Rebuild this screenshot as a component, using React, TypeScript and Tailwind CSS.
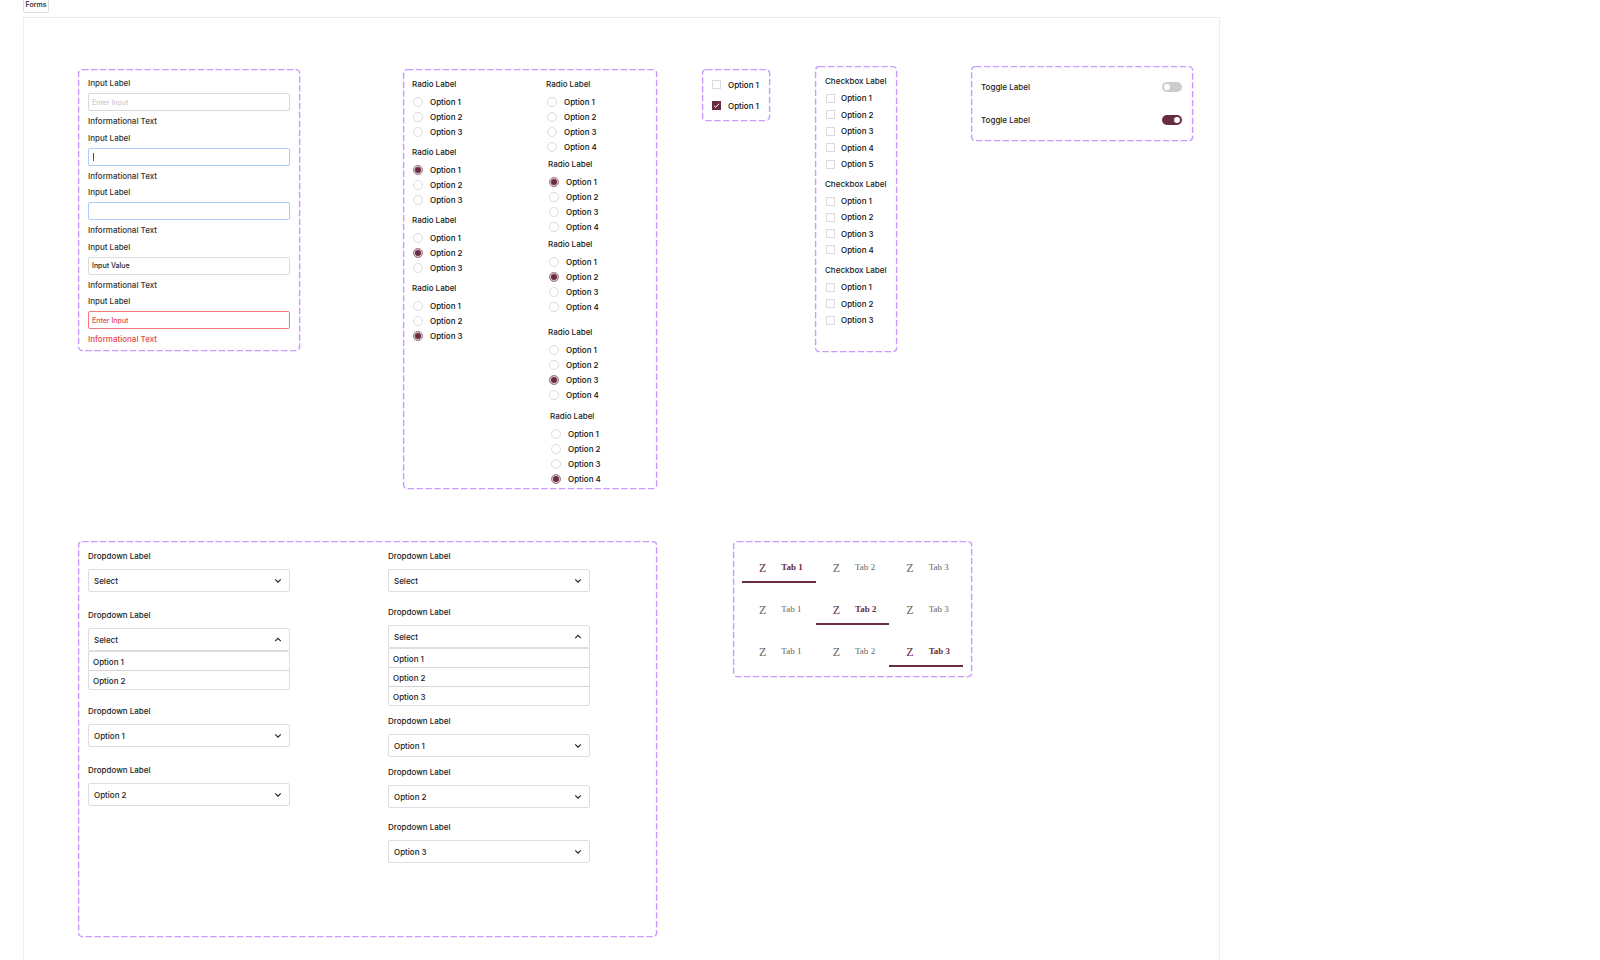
import { useId, useState, type ReactNode } from "react";

function Frame({ className, children }: { className: string; children: ReactNode }) {
  return (
    <section className={`relative shrink-0 ${className}`}>
      <svg className="pointer-events-none absolute inset-0 h-full w-full overflow-visible" aria-hidden="true">
        <rect
          x="0.6"
          y="0.6"
          rx="3.5"
          className="h-[calc(100%-1px)] w-[calc(100%-1px)]"
          fill="none"
          stroke="#c79bff"
          strokeWidth="1.4"
          strokeDasharray="6.4 2.5"
        />
      </svg>
      {children}
    </section>
  );
}

type FieldProps = { value?: string; placeholder?: string; look: string; note?: string; caret?: boolean };

function Field({ value = "", placeholder, look, note = "text-[#333]", caret }: FieldProps) {
  const id = useId();
  const [text, setText] = useState(value);
  return (
    <div className="flex flex-col gap-1 text-[8px] leading-3">
      <label htmlFor={id} className="text-[#333]">
        Input Label
      </label>
      <div className="relative flex">
        <input
          id={id}
          value={text}
          placeholder={placeholder}
          onChange={(e) => setText(e.target.value)}
          aria-describedby={`${id}-note`}
          className={`h-[18px] w-full rounded-[2px] border bg-white px-[3px] text-[7px] outline-none ${look}`}
        />
        {caret && <span className="absolute top-[5px] left-[5px] h-2 w-px bg-[#555]" />}
      </div>
      <p id={`${id}-note`} className={note}>
        Informational Text
      </p>
    </div>
  );
}

function RadioGroup({ count, selected, className = "" }: { count: number; selected?: number; className?: string }) {
  const name = useId();
  const [value, setValue] = useState(selected);
  return (
    <fieldset className={className}>
      <legend className="mb-1 leading-3">Radio Label</legend>
      {Array.from({ length: count }, (_, i) => i + 1).map((n) => (
        <label key={n} className="flex h-[15px] items-center gap-[7px] pl-px text-[#111]">
          <input
            type="radio"
            name={name}
            checked={value === n}
            onChange={() => setValue(n)}
            className="size-[10px] appearance-none rounded-full border border-[#dcdcdc] bg-white checked:border-[#a98492] checked:bg-[#6a2c44] checked:shadow-[inset_0_0_0_1px_#e0d0d6]"
          />
          Option {n}
        </label>
      ))}
    </fieldset>
  );
}

function Checkbox({ label, defaultChecked, className }: { label: string; defaultChecked?: boolean; className: string }) {
  const [on, setOn] = useState(!!defaultChecked);
  return (
    <label className={`flex items-center text-[#111] ${className}`}>
      <span className="relative flex">
        <input
          type="checkbox"
          checked={on}
          onChange={() => setOn(!on)}
          className="size-[9px] appearance-none border border-[#dcdcdc] bg-white checked:border-[#6a2c44] checked:bg-[#6a2c44]"
        />
        {on && (
          <svg viewBox="0 0 9 9" className="pointer-events-none absolute inset-0 size-[9px]" aria-hidden="true">
            <path d="M2 4.8 3.7 6.3 7 2.8" fill="none" stroke="#fff" strokeWidth="1" />
          </svg>
        )}
      </span>
      {label}
    </label>
  );
}

function CheckboxGroup({ count, className }: { count: number; className: string }) {
  return (
    <fieldset>
      <legend className="mb-[3px] leading-3">Checkbox Label</legend>
      <div className={`flex flex-col justify-between ${className}`}>
        {Array.from({ length: count }, (_, i) => (
          <Checkbox key={i} label={`Option ${i + 1}`} className="h-4 gap-[6px] pl-px" />
        ))}
      </div>
    </fieldset>
  );
}

function Toggle({ initial }: { initial: boolean }) {
  const [on, setOn] = useState(initial);
  const id = useId();
  return (
    <div className="flex h-[33px] items-center justify-between">
      <label htmlFor={id}>Toggle Label</label>
      <button
        id={id}
        role="switch"
        aria-checked={on}
        onClick={() => setOn(!on)}
        className={`flex h-[10px] w-5 items-center rounded-full px-[2px] ${on ? "justify-end bg-[#6a2c44]" : "justify-start bg-[#ccc]"}`}
      >
        <span className="size-[6px] rounded-full bg-white" />
      </button>
    </div>
  );
}

function Chevron({ up }: { up?: boolean }) {
  return (
    <svg viewBox="0 0 8 8" className="pointer-events-none absolute top-2 right-2 size-2" aria-hidden="true">
      <path d={up ? "M1.2 5.2 4 2.4 6.8 5.2" : "M1.2 2.4 4 5.2 6.8 2.4"} fill="none" stroke="#222" strokeWidth="1.1" />
    </svg>
  );
}

type DropdownProps = { options: number; initial?: string; open?: boolean; className?: string };

function Dropdown({ options, initial = "Select", open, className = "" }: DropdownProps) {
  const id = useId();
  const [value, setValue] = useState(initial);
  const names = Array.from({ length: options }, (_, i) => `Option ${i + 1}`);
  return (
    <div className={className}>
      <label htmlFor={id} className="mb-[7px] block leading-3">
        Dropdown Label
      </label>
      <div className="relative">
        <select
          id={id}
          value={value}
          onChange={(e) => setValue(e.target.value)}
          className="block h-[23px] w-full appearance-none rounded-[2px] border border-[#dedede] bg-white px-[5px] text-[#222] outline-none"
        >
          {["Select", ...names].map((o) => (
            <option key={o}>{o}</option>
          ))}
        </select>
        <Chevron up={open} />
      </div>
      {open && (
        <ul className="divide-y divide-[#d6d6d6] rounded-b-[2px] border border-[#dedede] text-[#222]">
          {names.map((o) => (
            <li key={o}>
              <button onClick={() => setValue(o)} className="block h-[18px] w-full px-1 pt-px text-left">
                {o}
              </button>
            </li>
          ))}
        </ul>
      )}
    </div>
  );
}

function Tabs({ initial }: { initial: number }) {
  const [active, setActive] = useState(initial);
  return (
    <div role="tablist" className="grid h-[34px] grid-cols-3 font-['Liberation_Serif',serif] text-[9px]">
      {[1, 2, 3].map((n) => (
        <button
          key={n}
          role="tab"
          aria-selected={active === n}
          onClick={() => setActive(n)}
          className={`flex items-center gap-[15px] border-b-2 pt-[5px] pl-[17px] ${active === n ? "border-[#6a2c44] font-semibold text-[#6a2c44]" : "border-transparent text-[#666]"}`}
        >
          <span className="text-[12px] font-normal">Z</span>
          <span>Tab {n}</span>
        </button>
      ))}
    </div>
  );
}

export default function App() {
  return (
    <main className="flex min-h-screen flex-col bg-white pl-[23px] font-[Inter,sans-serif] text-[8px] font-medium text-[#222]">
      <h1 className="flex h-[13px] w-[26px] items-center justify-center rounded-b-[2px] border border-t-0 border-[#ddd] pb-[2px] text-[7px]">
        Forms
      </h1>
      <div className="mt-1 w-full max-w-[1197px] flex-1 border border-b-0 border-[#ececec] pt-12 pr-[26px] pl-[54px]">
        <div className="flex items-start">
          <Frame className="mt-[3px] flex h-[282px] w-[222px] flex-col justify-between px-[10px] pt-2 pb-[6px]">
            <Field placeholder="Enter Input" look="border-[#d9d9d9] placeholder:text-[#ccc]" />
            <Field look="border-[#a9cdfb]" caret />
            <Field look="border-[#a9cdfb]" />
            <Field value="Input Value" look="border-[#dcdcdc] text-[#222]" />
            <Field placeholder="Enter Input" look="border-[#f2787c] placeholder:text-[#e8474d]" note="text-[#e8474d]" />
          </Frame>

          <Frame className="mt-[3px] ml-[103px] flex w-[254px] pt-[9px] pb-[3px] pl-[9px]">
            <div className="flex w-[134px] flex-col gap-[7px]">
              <RadioGroup count={3} />
              <RadioGroup count={3} selected={1} />
              <RadioGroup count={3} selected={2} />
              <RadioGroup count={3} selected={3} />
            </div>
            <div className="flex flex-col gap-1">
              <RadioGroup count={4} />
              <RadioGroup count={4} selected={1} className="pl-[2px]" />
              <RadioGroup count={4} selected={2} className="pl-[2px]" />
              <RadioGroup count={4} selected={3} className="mt-2 pl-[2px]" />
              <RadioGroup count={4} selected={4} className="mt-1 pl-[4px]" />
            </div>
          </Frame>

          <Frame className="mt-[3px] ml-[45px] flex h-[52px] w-[68px] flex-col justify-center gap-[9px] pl-[10px]">
            <Checkbox label="Option 1" className="h-3 gap-[7px]" />
            <Checkbox label="Option 1" defaultChecked className="h-3 gap-[7px]" />
          </Frame>

          <Frame className="ml-[45px] flex h-[286px] w-[82px] flex-col gap-[6px] pt-[9px] pl-[10px]">
            <CheckboxGroup count={5} className="h-[82px]" />
            <CheckboxGroup count={4} className="h-[65px]" />
            <CheckboxGroup count={3} className="h-[49px]" />
          </Frame>

          <Frame className="ml-[74px] w-[222px] pt-1 pr-[11px] pb-[5px] pl-[10px]">
            <Toggle initial={false} />
            <Toggle initial={true} />
          </Frame>
        </div>

        <div className="mt-[52px] flex items-start">
          <Frame className="flex h-[396px] w-[579px] gap-[98px] pt-[9px] pl-[10px]">
            <div className="w-[202px]">
              <Dropdown options={2} />
              <Dropdown options={2} open className="mt-[17px]" />
              <Dropdown options={2} initial="Option 1" className="mt-[15px]" />
              <Dropdown options={2} initial="Option 2" className="mt-[17px]" />
            </div>
            <div className="w-[202px]">
              <Dropdown options={3} />
              <Dropdown options={3} open className="mt-[14px]" />
              <Dropdown options={3} initial="Option 1" className="mt-[9px]" />
              <Dropdown options={3} initial="Option 2" className="mt-[9px]" />
              <Dropdown options={3} initial="Option 3" className="mt-[13px]" />
            </div>
          </Frame>

          <Frame className="ml-[76px] flex w-[239px] flex-col gap-2 px-[9px] pt-2 pb-[10px]">
            <Tabs initial={1} />
            <Tabs initial={2} />
            <Tabs initial={3} />
          </Frame>
        </div>
      </div>
    </main>
  );
}
